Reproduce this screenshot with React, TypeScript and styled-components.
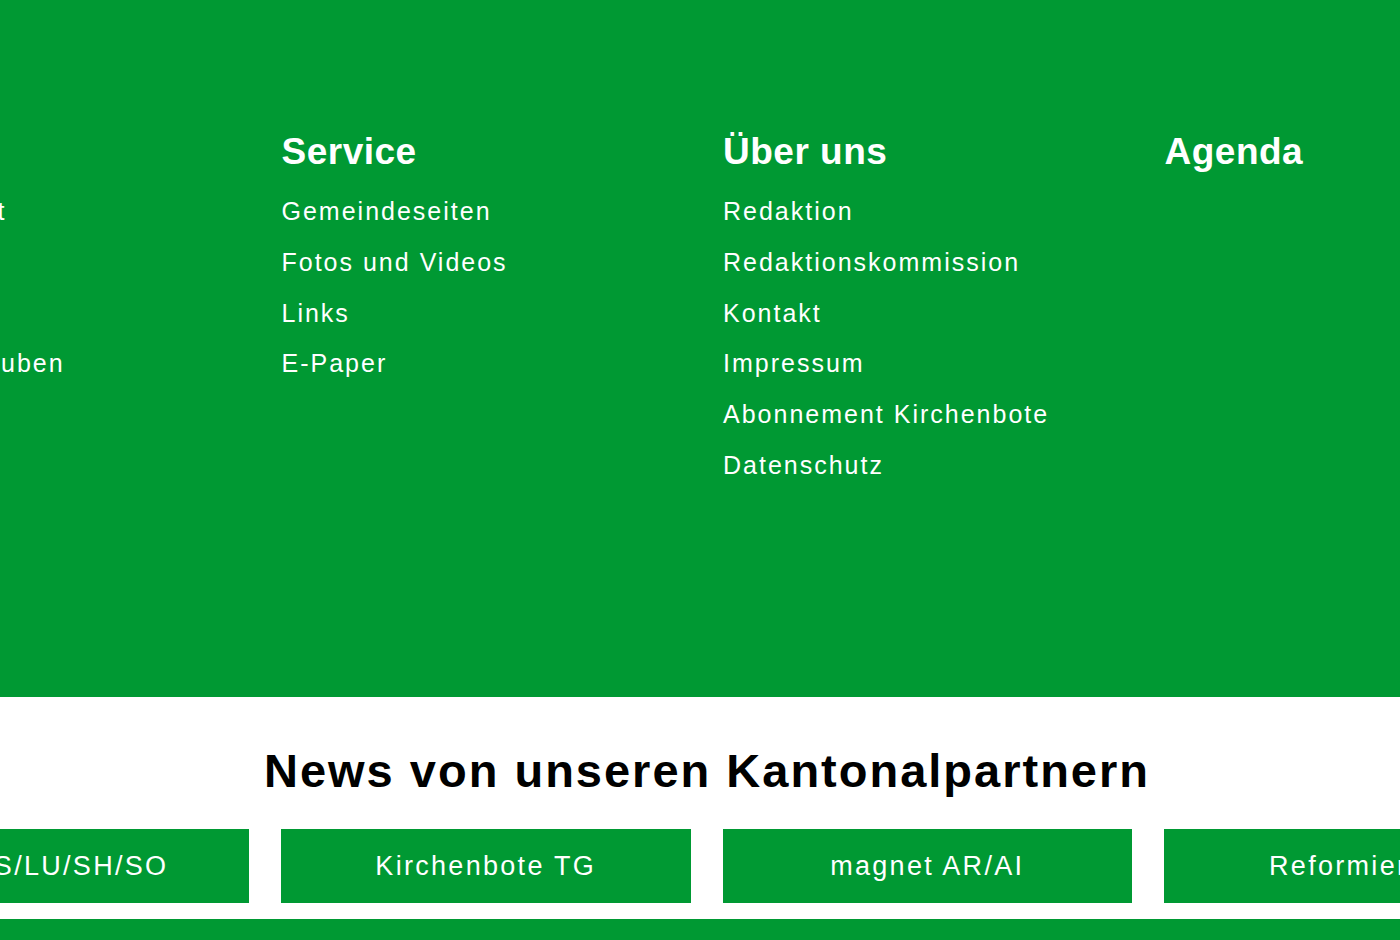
import React from "react";
import styled, { createGlobalStyle } from "styled-components";

const GREEN = "#009933";

const Global = createGlobalStyle`
  html, body {
    margin: 0;
    padding: 0;
    overflow: hidden;
    background: #ffffff;
  }
  body {
    font-family: "Liberation Sans", Arial, sans-serif;
  }
`;

const Page = styled.div`
  width: 1400px;
  overflow: hidden;
`;

const Footer = styled.footer`
  background: ${GREEN};
  height: 697px;
  box-sizing: border-box;
  padding-top: 130px;
`;

const Container = styled.div`
  width: 1734px;
  margin-left: -160.5px;
  display: grid;
  grid-template-columns: repeat(4, 1fr);
  column-gap: 32px;
`;

const Column = styled.div`
  display: flex;
  flex-direction: column;
  padding-left: 0.5px;
`;

const ColumnTitle = styled.h3`
  margin: 0 0 19px;
  font-size: 37px;
  line-height: 44px;
  font-weight: 700;
  letter-spacing: 0.5px;
  color: #ffffff;
  white-space: nowrap;
`;

const LinkList = styled.ul`
  list-style: none;
  margin: 0;
  padding: 0;
  display: flex;
  flex-direction: column;
  gap: 14.8px;
`;

const LinkItem = styled.li`
  font-size: 25px;
  line-height: 36px;
  letter-spacing: 2px;
  color: #ffffff;
  white-space: nowrap;
`;

const Partners = styled.section`
  background: #ffffff;
  padding: 45.5px 0 16px;
`;

const PartnersTitle = styled.h2`
  margin: 0 0 30.5px;
  text-align: center;
  font-size: 47px;
  line-height: 56px;
  font-weight: 700;
  letter-spacing: 2px;
  color: #000000;
  padding-left: 14px;
`;

const PartnerButton = styled.a`
  display: flex;
  align-items: center;
  justify-content: center;
  height: 74px;
  background: ${GREEN};
  color: #ffffff;
  font-size: 27px;
  letter-spacing: 2.3px;
  text-decoration: none;
  white-space: nowrap;
  overflow: hidden;
`;

const BottomBar = styled.div`
  background: ${GREEN};
  height: 40px;
`;

const columns = [
  { title: "Themen", links: ["Schwerpunkt", "Kirche", "Kultur", "Leben & Glauben"] },
  { title: "Service", links: ["Gemeindeseiten", "Fotos und Videos", "Links", "E-Paper"] },
  {
    title: "Über uns",
    links: [
      "Redaktion",
      "Redaktionskommission",
      "Kontakt",
      "Impressum",
      "Abonnement Kirchenbote",
      "Datenschutz",
    ],
  },
  { title: "Agenda", links: [] as string[] },
];

const partners = ["AG/BS/LU/SH/SO", "Kirchenbote TG", "magnet AR/AI", "Reformiert ZH"];

export default function App() {
  return (
    <Page>
      <Global />
      <Footer>
        <Container>
          {columns.map((c) => (
            <Column key={c.title}>
              <ColumnTitle>{c.title}</ColumnTitle>
              <LinkList>
                {c.links.map((l) => (
                  <LinkItem key={l}>{l}</LinkItem>
                ))}
              </LinkList>
            </Column>
          ))}
        </Container>
      </Footer>
      <Partners>
        <PartnersTitle>News von unseren Kantonalpartnern</PartnersTitle>
        <Container>
          {partners.map((p) => (
            <PartnerButton key={p} href="#">
              {p}
            </PartnerButton>
          ))}
        </Container>
      </Partners>
      <BottomBar />
    </Page>
  );
}
